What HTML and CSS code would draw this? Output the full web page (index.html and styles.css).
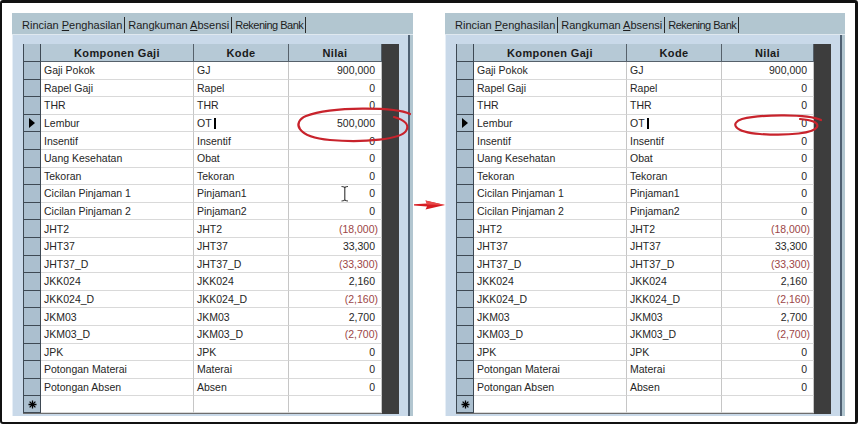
FILE: index.html
```html
<!DOCTYPE html>
<html>
<head>
<meta charset="utf-8">
<link rel="stylesheet" href="styles.css">
</head>
<body>
<div class="frame">
  <div class="panel">
    <div class="tabs">
      <div class="tab">Rincian <u>P</u>enghasilan</div>
      <div class="tab">Rangkuman <u>A</u>bsensi</div>
      <div class="tab">Rekening Bank</div>
    </div>
    <div class="page">
      <div class="grid">
        <div class="table">
          <div class="row hdr"><div class="ind"></div><div class="h">Komponen Gaji</div><div class="h">Kode</div><div class="h">Nilai</div></div>
          <div class="row"><div class="ind"></div><div class="c">Gaji Pokok</div><div class="c">GJ</div><div class="c num">900,000</div></div>
          <div class="row"><div class="ind"></div><div class="c">Rapel Gaji</div><div class="c">Rapel</div><div class="c num">0</div></div>
          <div class="row"><div class="ind"></div><div class="c">THR</div><div class="c">THR</div><div class="c num">0</div></div>
          <div class="row"><div class="ind"><span class="tri"></span></div><div class="c">Lembur</div><div class="c">OT<span class="caret"></span></div><div class="c num">500,000</div></div>
          <div class="row"><div class="ind"></div><div class="c">Insentif</div><div class="c">Insentif</div><div class="c num">0</div></div>
          <div class="row"><div class="ind"></div><div class="c">Uang Kesehatan</div><div class="c">Obat</div><div class="c num">0</div></div>
          <div class="row"><div class="ind"></div><div class="c">Tekoran</div><div class="c">Tekoran</div><div class="c num">0</div></div>
          <div class="row"><div class="ind"></div><div class="c">Cicilan Pinjaman 1</div><div class="c">Pinjaman1</div><div class="c num">0</div></div>
          <div class="row"><div class="ind"></div><div class="c">Cicilan Pinjaman 2</div><div class="c">Pinjaman2</div><div class="c num">0</div></div>
          <div class="row"><div class="ind"></div><div class="c">JHT2</div><div class="c">JHT2</div><div class="c num neg">(18,000)</div></div>
          <div class="row"><div class="ind"></div><div class="c">JHT37</div><div class="c">JHT37</div><div class="c num">33,300</div></div>
          <div class="row"><div class="ind"></div><div class="c">JHT37_D</div><div class="c">JHT37_D</div><div class="c num neg">(33,300)</div></div>
          <div class="row"><div class="ind"></div><div class="c">JKK024</div><div class="c">JKK024</div><div class="c num">2,160</div></div>
          <div class="row"><div class="ind"></div><div class="c">JKK024_D</div><div class="c">JKK024_D</div><div class="c num neg">(2,160)</div></div>
          <div class="row"><div class="ind"></div><div class="c">JKM03</div><div class="c">JKM03</div><div class="c num">2,700</div></div>
          <div class="row"><div class="ind"></div><div class="c">JKM03_D</div><div class="c">JKM03_D</div><div class="c num neg">(2,700)</div></div>
          <div class="row"><div class="ind"></div><div class="c">JPK</div><div class="c">JPK</div><div class="c num">0</div></div>
          <div class="row"><div class="ind"></div><div class="c">Potongan Materai</div><div class="c">Materai</div><div class="c num">0</div></div>
          <div class="row"><div class="ind"></div><div class="c">Potongan Absen</div><div class="c">Absen</div><div class="c num">0</div></div>
          <div class="row newrow"><div class="ind"><svg class="star" width="9" height="9" viewBox="0 0 9 9"><path d="M4.5 0.5V8.5M0.5 4.5H8.5M1.6 1.6L7.4 7.4M7.4 1.6L1.6 7.4" stroke="#000" stroke-width="1.3"/></svg></div><div class="c"></div><div class="c"></div><div class="c"></div></div>
        </div>
        <div class="fill"></div>
      </div>
    </div>
  </div>

  <div class="gap">
    <svg width="31" height="10" viewBox="0 0 31 10"><path d="M0 4.3 L13 3.4 L11.5 0.6 L31 5 L11.5 9.4 L13 6.4 L0 5.6 Z" fill="#d61c22"/><path d="M11.5 0.6 L31 5 L13 4.6 Z" fill="#e84a4a"/></svg>
  </div>

  <div class="panel right">
    <div class="tabs">
      <div class="tab">Rincian <u>P</u>enghasilan</div>
      <div class="tab">Rangkuman <u>A</u>bsensi</div>
      <div class="tab">Rekening Bank</div>
    </div>
    <div class="page">
      <div class="grid">
        <div class="table">
          <div class="row hdr"><div class="ind"></div><div class="h">Komponen Gaji</div><div class="h">Kode</div><div class="h">Nilai</div></div>
          <div class="row"><div class="ind"></div><div class="c">Gaji Pokok</div><div class="c">GJ</div><div class="c num">900,000</div></div>
          <div class="row"><div class="ind"></div><div class="c">Rapel Gaji</div><div class="c">Rapel</div><div class="c num">0</div></div>
          <div class="row"><div class="ind"></div><div class="c">THR</div><div class="c">THR</div><div class="c num">0</div></div>
          <div class="row"><div class="ind"><span class="tri"></span></div><div class="c">Lembur</div><div class="c">OT<span class="caret"></span></div><div class="c num">0</div></div>
          <div class="row"><div class="ind"></div><div class="c">Insentif</div><div class="c">Insentif</div><div class="c num">0</div></div>
          <div class="row"><div class="ind"></div><div class="c">Uang Kesehatan</div><div class="c">Obat</div><div class="c num">0</div></div>
          <div class="row"><div class="ind"></div><div class="c">Tekoran</div><div class="c">Tekoran</div><div class="c num">0</div></div>
          <div class="row"><div class="ind"></div><div class="c">Cicilan Pinjaman 1</div><div class="c">Pinjaman1</div><div class="c num">0</div></div>
          <div class="row"><div class="ind"></div><div class="c">Cicilan Pinjaman 2</div><div class="c">Pinjaman2</div><div class="c num">0</div></div>
          <div class="row"><div class="ind"></div><div class="c">JHT2</div><div class="c">JHT2</div><div class="c num neg">(18,000)</div></div>
          <div class="row"><div class="ind"></div><div class="c">JHT37</div><div class="c">JHT37</div><div class="c num">33,300</div></div>
          <div class="row"><div class="ind"></div><div class="c">JHT37_D</div><div class="c">JHT37_D</div><div class="c num neg">(33,300)</div></div>
          <div class="row"><div class="ind"></div><div class="c">JKK024</div><div class="c">JKK024</div><div class="c num">2,160</div></div>
          <div class="row"><div class="ind"></div><div class="c">JKK024_D</div><div class="c">JKK024_D</div><div class="c num neg">(2,160)</div></div>
          <div class="row"><div class="ind"></div><div class="c">JKM03</div><div class="c">JKM03</div><div class="c num">2,700</div></div>
          <div class="row"><div class="ind"></div><div class="c">JKM03_D</div><div class="c">JKM03_D</div><div class="c num neg">(2,700)</div></div>
          <div class="row"><div class="ind"></div><div class="c">JPK</div><div class="c">JPK</div><div class="c num">0</div></div>
          <div class="row"><div class="ind"></div><div class="c">Potongan Materai</div><div class="c">Materai</div><div class="c num">0</div></div>
          <div class="row"><div class="ind"></div><div class="c">Potongan Absen</div><div class="c">Absen</div><div class="c num">0</div></div>
          <div class="row newrow"><div class="ind"><svg class="star" width="9" height="9" viewBox="0 0 9 9"><path d="M4.5 0.5V8.5M0.5 4.5H8.5M1.6 1.6L7.4 7.4M7.4 1.6L1.6 7.4" stroke="#000" stroke-width="1.3"/></svg></div><div class="c"></div><div class="c"></div><div class="c"></div></div>
        </div>
        <div class="fill"></div>
      </div>
    </div>
  </div>
</div>

<svg class="overlay" width="858" height="431" viewBox="0 0 858 431">
  <path d="M410 114 C 396 107, 332 106, 306 116 C 292 122, 296 137, 330 140 C 365 143, 401 139, 406 131 C 410 125, 405 120, 394 117" fill="none" stroke="#c8232c" stroke-width="2.2" stroke-linecap="round"/>
  <path d="M821 120 C 808 114, 762 114, 742 119 C 730 123, 733 132, 760 134 C 790 136, 814 133, 817 127 C 819 122, 811 120, 800 119" fill="none" stroke="#c8232c" stroke-width="2.2" stroke-linecap="round"/>
  <path d="M341.5 186.5 Q344.5 186.5 344.8 188 M348 186.5 Q345 186.5 344.8 188 M344.8 188 V199.5 M341.5 201 Q344.5 201 344.8 199.5 M348 201 Q345 201 344.8 199.5" fill="none" stroke="#333" stroke-width="1.1"/>
</svg>
</body>
</html>
```

FILE: styles.css
```css
body {
  margin: 0;
  background: #ffffff;
  font-family: "Liberation Sans", Arial, sans-serif;
  position: relative;
  width: 858px;
  height: 431px;
  overflow: hidden;
}

.frame {
  width: 858px;
  height: 424px;
  box-sizing: border-box;
  border: 2px solid #111;
  border-top-width: 3px;
  border-right-width: 3px;
  border-radius: 3px;
  padding: 10px 10px 0 10px;
  display: flex;
  align-items: flex-start;
}

.panel {
  width: 401px;
  height: 403px;
  display: flex;
  flex-direction: column;
  background: #b2c6d0;
}

.panel.right {
  width: 400px;
}

.tabs {
  height: 22px;
  box-sizing: border-box;
  display: flex;
  align-items: flex-end;
  padding: 0 0 1px 10px;
  border-bottom: 1px solid #dfe8ef;
}

.tab {
  font-size: 11px;
  color: #1c1c1c;
  height: 16px;
  line-height: 16px;
  padding-right: 2px;
  margin-right: 3px;
  border-right: 1px solid #2a2a2a;
  white-space: nowrap;
}

.tab:last-child {
  letter-spacing: -0.5px;
}

.tab u {
  text-decoration-thickness: 1px;
  text-underline-offset: 1px;
}

.page {
  flex: 1;
  background: #c9d9e9;
  margin-right: 3px;
  border-left: 1px solid #e6eef6;
  border-right: 2px solid #4f6072;
  padding: 9px 9px 2px 10px;
}

.grid {
  display: flex;
  height: 370px;
}

.table {
  flex: 1;
  display: flex;
  flex-direction: column;
  background: #ffffff;
  border-bottom: 1px solid #6d6d6d;
  box-sizing: border-box;
}

.fill {
  width: 17px;
  background: #3d3d3d;
}

.row {
  display: grid;
  grid-template-columns: 18px 153px 95px 1fr;
  height: 17.6px;
  flex: none;
}

.row.hdr {
  height: 18px;
}

.row.newrow {
  flex: 1;
}

.row > div {
  box-sizing: border-box;
  display: flex;
  align-items: center;
  overflow: hidden;
  white-space: nowrap;
}

.ind {
  background: #abbfcf;
  border-left: 1px solid #3e4954;
  border-right: 1px solid #3e4954;
  border-bottom: 1px solid #3e4954;
  justify-content: center;
}

.hdr .ind {
  background: #b0c3d1;
}

.h {
  background: #b6c9d6;
  justify-content: center;
  font-weight: bold;
  font-size: 11px;
  letter-spacing: 0.35px;
  color: #1a1a1a;
  border-right: 1px solid #56616b;
  border-bottom: 1px solid #56616b;
}

.c {
  font-size: 10.5px;
  color: #262626;
  padding-left: 3px;
  border-right: 1px solid #c6c6c6;
  border-bottom: 1px solid #d9d9d9;
}

.num {
  justify-content: flex-end;
  padding-right: 6px;
}

.neg {
  color: #9c4646;
  padding-right: 3px;
}

.tri {
  width: 0;
  height: 0;
  border-left: 6px solid #000;
  border-top: 5px solid transparent;
  border-bottom: 5px solid transparent;
}

.caret {
  display: inline-block;
  width: 2px;
  height: 11px;
  background: #000;
  margin-left: 2px;
}

.gap {
  width: 32px;
  display: flex;
  justify-content: center;
  padding-top: 187px;
}

.overlay {
  position: absolute;
  left: 0;
  top: 0;
  pointer-events: none;
}
```
